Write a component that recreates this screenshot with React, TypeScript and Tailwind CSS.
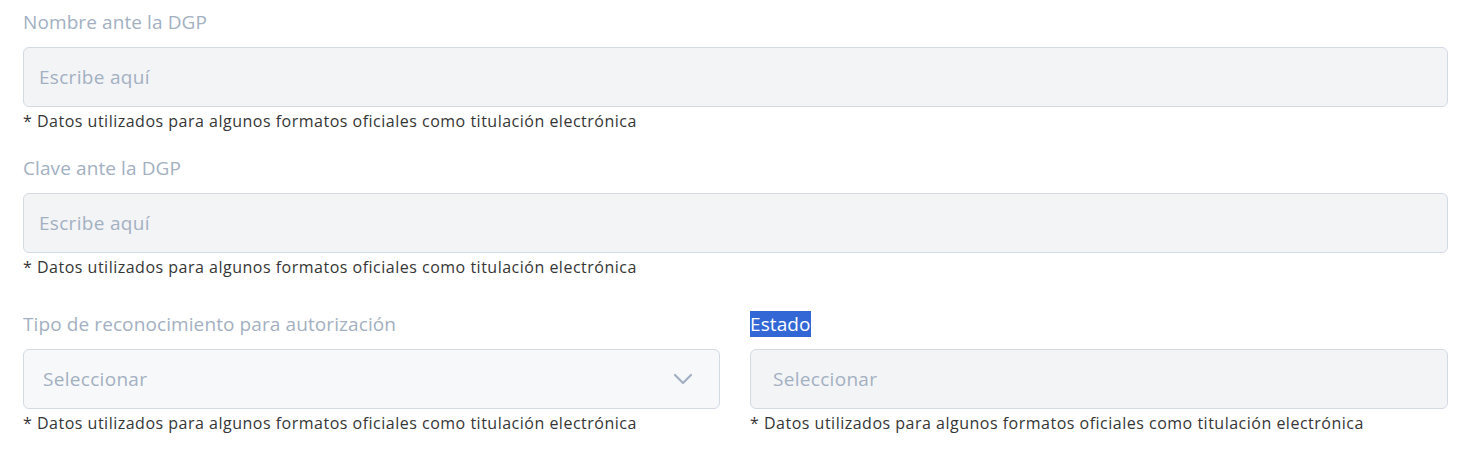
const NOTE = '* Datos utilizados para algunos formatos oficiales como titulación electrónica';

function Label({ children, highlight }: { children: string; highlight?: boolean }) {
  return (
    <div className="h-[30px] text-[19px] leading-[30px] tracking-[0.1px]">
      <span className={highlight ? 'bg-[#3367d6] text-white' : 'text-[#a3b0c2]'}>{children}</span>
    </div>
  );
}

function Note() {
  return <p className="mt-[4px] text-[16px] leading-[20px] tracking-[0.5px] text-[#363636]">{NOTE}</p>;
}

function TextField({ label }: { label: string }) {
  return (
    <div className="flex flex-col">
      <Label>{label}</Label>
      <input
        placeholder="Escribe aquí"
        className="mt-[10px] h-[60px] w-full rounded-md border border-[#d3dae4] bg-[#f3f4f6] px-[15px] text-[19px] tracking-[0.3px] text-[#363636] outline-none placeholder:text-[#a3b0c2]"
      />
      <Note />
    </div>
  );
}

export default function App() {
  return (
    <div className="min-h-screen bg-white pl-[23px] pr-[12px] pt-[7px] font-['Open_Sans',sans-serif]">
      <div className="flex flex-col gap-[22px]">
        <TextField label="Nombre ante la DGP" />
        <TextField label="Clave ante la DGP" />
        <div className="mt-[10px] grid grid-cols-[697px_1fr] gap-[30px]">
          <div className="flex flex-col">
            <Label>Tipo de reconocimiento para autorización</Label>
            <button className="mt-[10px] flex h-[60px] w-full items-center justify-between rounded-md border border-[#d3dae4] bg-[#f7f8fa] pl-[19px] pr-[26px] text-left text-[19px] tracking-[0.3px] text-[#a3b0c2]">
              <span>Seleccionar</span>
              <svg width="20" height="12" viewBox="0 0 20 12" fill="none" stroke="#a3b0c2" strokeWidth="2.2" strokeLinecap="round" strokeLinejoin="round">
                <polyline points="2,2 10,10 18,2" />
              </svg>
            </button>
            <Note />
          </div>
          <div className="flex flex-col">
            <Label highlight>Estado</Label>
            <div className="mt-[10px] flex h-[60px] w-full items-center rounded-md border border-[#d3dae4] bg-[#f3f4f6] px-[22px] text-[19px] tracking-[0.3px] text-[#a3b0c2]">
              Seleccionar
            </div>
            <Note />
          </div>
        </div>
      </div>
    </div>
  );
}
